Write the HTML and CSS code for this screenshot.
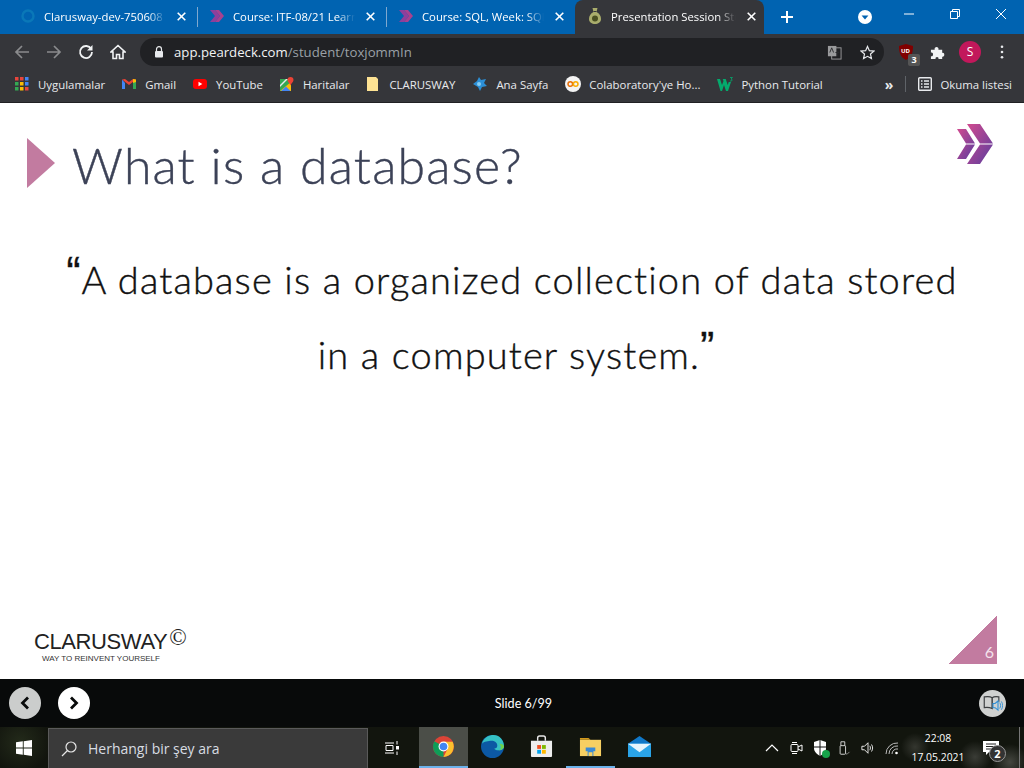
FILE: index.html
```html
<!DOCTYPE html>
<html>
<head>
    <title>Presentation Session</title>
    <link rel="stylesheet" href="styles.css">
</head>
<body>

    <div class="tabbar">
        <div class="tab">
            <svg class="favicon" viewBox="0 0 16 16"><circle cx="8" cy="8" r="5.5" fill="none" stroke="#0a78b8" stroke-width="2.4"/></svg>
            <span class="tab-title">Clarusway-dev-750608</span>
            <svg class="tab-close" viewBox="0 0 9 9"><path d="M.7.7l7.600 7.600M8.300.7L.7 8.300" stroke="#fff" stroke-width="1.600"/></svg>
        </div>
        <div class="tab tab-sep">
            <svg class="favicon" viewBox="0 0 16 16"><path d="M1 2h5l5 6-5 6H1l5-6z" fill="#8e3f9c"/><path d="M6 2h4l5 6-5 6H6l5-6z" fill="#a8418f"/></svg>
            <span class="tab-title">Course: ITF-08/21 Learn</span>
            <svg class="tab-close" viewBox="0 0 9 9"><path d="M.7.7l7.600 7.600M8.300.7L.7 8.300" stroke="#fff" stroke-width="1.600"/></svg>
        </div>
        <div class="tab tab-sep">
            <svg class="favicon" viewBox="0 0 16 16"><path d="M1 2h5l5 6-5 6H1l5-6z" fill="#8e3f9c"/><path d="M6 2h4l5 6-5 6H6l5-6z" fill="#a8418f"/></svg>
            <span class="tab-title">Course: SQL, Week: SQL</span>
            <svg class="tab-close" viewBox="0 0 9 9"><path d="M.7.7l7.600 7.600M8.300.7L.7 8.300" stroke="#fff" stroke-width="1.600"/></svg>
        </div>
        <div class="tab tab-active">
            <svg class="favicon" viewBox="0 0 16 16"><path d="M5.500 0h5L9.500 4c3 1.500 4.500 4 4.500 7 0 3.500-3 5-6 5s-6-1.500-6-5c0-3 1.500-5.500 4.500-7z" fill="#a9ad6c"/><path d="M6.500 3.500h3" stroke="#35363a"/><circle cx="8" cy="10.500" r="3" fill="#4a5022"/></svg>
            <span class="tab-title">Presentation Session Stu</span>
            <svg class="tab-close" viewBox="0 0 9 9"><path d="M.7.7l7.600 7.600M8.300.7L.7 8.300" stroke="#fff" stroke-width="1.600"/></svg>
        </div>
        <svg class="new-tab" viewBox="0 0 12 12"><path d="M6 0v12M0 6h12" stroke="#fff" stroke-width="2"/></svg>
        <svg class="profile-down" viewBox="0 0 14 14"><circle cx="7" cy="7" r="7" fill="#fff"/><path d="M3.600 5.400h6.800L7 9.600z" fill="#0063b1"/></svg>
        <div class="window-btns">
            <svg viewBox="0 0 10 10"><path d="M0 5h10" stroke="#fff"/></svg>
            <svg viewBox="0 0 10 10"><path d="M.5 2.500h7v7h-7zM2.500 2.500v-2h7v7h-2" fill="none" stroke="#fff"/></svg>
            <svg viewBox="0 0 10 10"><path d="M0 0l10 10M10 0L0 10" stroke="#fff"/></svg>
        </div>
    </div>

    <div class="toolbar">
        <svg class="nav-icon" viewBox="0 0 16 16"><path d="M15 8H2M8 2L2 8l6 6" fill="none" stroke="#8a8b8d" stroke-width="1.700"/></svg>
        <svg class="nav-icon" viewBox="0 0 16 16"><path d="M1 8h13M8 2l6 6-6 6" fill="none" stroke="#8a8b8d" stroke-width="1.700"/></svg>
        <svg class="nav-icon" viewBox="0 0 16 16"><path d="M13.200 5A6 6 0 1 0 14 8" fill="none" stroke="#f1f3f4" stroke-width="1.800"/><path d="M14.500 1v5.400H9z" fill="#f1f3f4"/></svg>
        <svg class="nav-icon" viewBox="0 0 16 16"><path d="M8 1.500L1 8h2v6.500h3.500v-4h3v4H13V8h2z" fill="none" stroke="#f1f3f4" stroke-width="1.600"/></svg>
        <div class="omnibox">
            <svg class="lock" viewBox="0 0 10 12"><path d="M2.500 5V3.200a2.500 2.500 0 0 1 5 0V5" fill="none" stroke="#e8eaed" stroke-width="1.200"/><rect x="1" y="5" width="8" height="6.500" rx="1" fill="#e8eaed"/></svg>
            <span class="url">app.peardeck.com<span class="url-path">/student/toxjommIn</span></span>
            <svg class="omni-icon" viewBox="0 0 16 16"><rect x="5" y="3" width="10" height="12" fill="none" stroke="#9a9b9d"/><rect x="1" y="1" width="9" height="11" fill="#9a9b9d"/><path d="M3 8l2-5 2 5M9 8h4M11 7v5" fill="none" stroke="#2a2b2e"/></svg>
            <svg class="omni-icon" viewBox="0 0 16 16"><path d="M8 1.500l2 4.500 4.800.5-3.600 3.200 1 4.800L8 12.100 3.800 14.500l1-4.800L1.200 6.500 6 6z" fill="none" stroke="#e8eaed" stroke-width="1.300"/></svg>
        </div>
        <div class="ublock">
            <svg viewBox="0 0 14 16"><path d="M7 0l7 2c0 6-1 11-7 14C1 13 0 8 0 2z" fill="#800000"/></svg>
            <span class="ublock-text">UD</span>
            <span class="ublock-count">3</span>
        </div>
        <svg class="puzzle" viewBox="0 0 16 16"><path d="M1 5h4c-1-4 5-4 4 0h4v3.500c3-1 3 5 0 4V15H9c1-3-4-3-3 0H1v-3c3 1 3-5 0-4z" fill="#f1f3f4"/></svg>
        <span class="avatar">S</span>
        <svg class="menu-dots" viewBox="0 0 4 16"><circle cx="2" cy="2" r="1.500" fill="#e8eaed"/><circle cx="2" cy="8" r="1.500" fill="#e8eaed"/><circle cx="2" cy="14" r="1.500" fill="#e8eaed"/></svg>
    </div>

    <div class="bookmarks">
        <span class="bookmark">
            <svg viewBox="0 0 14 14">
                <rect width="3.500" height="3.500" fill="#e8453c"/><rect x="5" width="3.500" height="3.500" fill="#e8453c"/><rect x="10" width="3.500" height="3.500" fill="#4285f4"/>
                <rect y="5" width="3.500" height="3.500" fill="#34a853"/><rect x="5" y="5" width="3.500" height="3.500" fill="#fbbc05"/><rect x="10" y="5" width="3.500" height="3.500" fill="#4285f4"/>
                <rect y="10" width="3.500" height="3.500" fill="#34a853"/><rect x="5" y="10" width="3.500" height="3.500" fill="#fbbc05"/><rect x="10" y="10" width="3.500" height="3.500" fill="#e8453c"/>
            </svg>Uygulamalar
        </span>
        <span class="bookmark">
            <svg viewBox="0 0 14 14"><path d="M0 2.500v9.500h3V6z" fill="#4285f4"/><path d="M14 2.500v9.500h-3V6z" fill="#34a853"/><path d="M0 2.500L7 8l7-5.500L11 2 7 5 3 2z" fill="#ea4335"/><path d="M11 2l3 .5V5l-3 1z" fill="#fbbc05"/></svg>Gmail
        </span>
        <span class="bookmark">
            <svg viewBox="0 0 14 14"><rect y="2" width="14" height="10" rx="3" fill="#f00"/><path d="M5.500 4.800v4.400L9.300 7z" fill="#fff"/></svg>YouTube
        </span>
        <span class="bookmark">
            <svg viewBox="0 0 14 14"><path d="M0 2h11v12H0z" fill="#34a853"/><path d="M0 14L11 5v9z" fill="#fbbc05"/><path d="M1 14l5-4.500 4.500 4.500z" fill="#4285f4"/><path d="M0 8L6 2h2L0 10z" fill="#e8eaed"/><path d="M10.500 0a3 3 0 0 1 3 3c0 2-2 3-3 5.500C9.500 6 7.500 5 7.500 3a3 3 0 0 1 3-3z" fill="#ea4335"/></svg>Haritalar
        </span>
        <span class="bookmark">
            <svg viewBox="0 0 14 14"><path d="M1 0h9l2 2v12H1z" fill="#fde293"/></svg>CLARUSWAY
        </span>
        <span class="bookmark bookmark-wide">
            <svg viewBox="0 0 16 16"><path d="M1 8l4-3 2-4 2 3 5-1-2 4 3 3-5 1-2 4-2-4z" fill="#2c8fd6"/><circle cx="7" cy="8" r="2" fill="#86cdf2"/></svg>Ana Sayfa
        </span>
        <span class="bookmark bookmark-wide">
            <svg viewBox="0 0 16 16"><circle cx="8" cy="8" r="8" fill="#f4f4f4"/><circle cx="5.300" cy="8" r="2.300" fill="none" stroke="#e8710a" stroke-width="1.500"/><circle cx="10.700" cy="8" r="2.300" fill="none" stroke="#f9ab00" stroke-width="1.500"/></svg>Colaboratory'ye Ho...
        </span>
        <span class="bookmark bookmark-wide">
            <svg viewBox="0 0 16 14"><path d="M0 2h3l2 6 1.500-4-.8-2h3l2 6 1-3h2.300l-3 9H9L7 8l-2 6H3.500z" fill="#04aa6d"/><path d="M13 .5h2.500L14 2c1.500 0 1.500 2 0 2h-1" fill="none" stroke="#04aa6d" stroke-width=".8"/></svg>Python Tutorial
        </span>
        <span class="bookmark-more">&raquo;</span>
        <span class="bookmark-sep"></span>
        <span class="bookmark reading-list">
            <svg viewBox="0 0 14 14"><rect x=".7" y=".7" width="12.600" height="12.600" rx="1" fill="none" stroke="#e8eaed" stroke-width="1.400"/><path d="M3 4h1.500M6 4h5M3 7h1.500M6 7h5M3 10h1.500M6 10h5" stroke="#e8eaed" stroke-width="1.300"/></svg>Okuma listesi
        </span>
    </div>

    <main class="slide">
        <header class="slide-head">
            <div class="slide-triangle"></div>
            <h1>What is a database?</h1>
            <svg class="slide-logo" viewBox="0 0 36 40">
                <defs>
                    <linearGradient id="chev" x1="0" y1="0" x2="1" y2="1">
                        <stop offset="0" stop-color="#d14a8f"/>
                        <stop offset="1" stop-color="#5a3d9e"/>
                    </linearGradient>
                </defs>
                <path d="M0 5h9l9 14.500H9z M9 20.500h9L9 35H0z" fill="url(#chev)"/>
                <path d="M10 0h13l13 19.500H23z M23 20.500h13L23 40H10z" fill="url(#chev)"/>
            </svg>
        </header>

        <div class="quote">
            <p><span class="quote-mark">&ldquo;</span>A database is a organized collection of data stored</p>
            <p class="quote-end">in a computer system.<span class="quote-mark">&rdquo;</span></p>
        </div>

        <footer class="slide-foot">
            <div class="brand">
                <div class="brand-name">CLARUSWAY<span class="brand-copy">&copy;</span></div>
                <div class="brand-tag">WAY TO REINVENT YOURSELF</div>
            </div>
            <div class="page-corner"><span>6</span></div>
        </footer>
    </main>

    <div class="deck-bar">
        <button class="deck-btn deck-prev">
            <svg viewBox="0 0 10 14"><path d="M8 1.500L2.500 7 8 12.500" fill="none" stroke="#080a0a" stroke-width="2.800"/></svg>
        </button>
        <button class="deck-btn">
            <svg viewBox="0 0 10 14"><path d="M2 1.500L7.500 7 2 12.500" fill="none" stroke="#080a0a" stroke-width="2.800"/></svg>
        </button>
        <span class="deck-count">Slide 6/99</span>
        <span class="deck-audio">
            <svg viewBox="0 0 24 20"><path d="M11 3C9 1.500 5 1.500 1.500 2v13c3-.5 6-.5 9.500 1zM11 3c2-1.500 5-1.500 8-1v6" fill="none" stroke="#3c3f41" stroke-width="1.400"/><path d="M11 3v13" stroke="#3c3f41"/><path d="M12 10h2.500l3.500-3v11l-3.500-3H12z" fill="none" stroke="#2f8fd6" stroke-width="1.300"/><path d="M20 9c1.500 1.500 1.500 5 0 7M22 7.500c2 2.500 2 7.500 0 10" fill="none" stroke="#2f8fd6" stroke-width="1.100"/></svg>
        </span>
    </div>

    <div class="taskbar">
        <svg class="win-logo" viewBox="0 0 16 16"><path d="M0 2.300l6.800-1v6.200H0zM7.700 1.200L16 0v7.500H7.700zM0 8.400h6.800v6.300l-6.800-1zM7.700 8.400H16V16l-8.300-1.200z" fill="#fff"/></svg>
        <div class="searchbox">
            <svg viewBox="0 0 16 16"><circle cx="10" cy="6" r="5" fill="none" stroke="#e6e6e6" stroke-width="1.200"/><path d="M6.500 9.500L1 15" stroke="#e6e6e6" stroke-width="1.300"/></svg>
            <span>Herhangi bir şey ara</span>
        </div>
        <svg class="taskview" viewBox="0 0 16 16"><path d="M1 3h9M1 13h9M2 5.500h7v5H2z" fill="none" stroke="#fff"/><path d="M13 1v3.500M13 11.500V15" stroke="#fff"/><rect x="12" y="6" width="3" height="3.500" fill="#fff"/></svg>
        <div class="task-app task-active">
            <svg viewBox="0 0 24 24"><circle cx="12" cy="12" r="11" fill="#db4437"/><path d="M12 12L2.500 6.500A11 11 0 0 0 12 23z" fill="#0f9d58"/><path d="M12 7h9.500A11 11 0 0 1 12 23l5-10z" fill="#fbc02d"/><circle cx="12" cy="12" r="5.200" fill="#fff"/><circle cx="12" cy="12" r="4" fill="#4285f4"/></svg>
        </div>
        <div class="task-app">
            <svg viewBox="0 0 24 24"><circle cx="12" cy="12" r="12" fill="#0c59a4"/><path d="M1 9C3 2 9 0 13 0c6 0 11 5 11 12 0 3-3 4-6 4-2 0-4-1-4-2 2 0 3-1 3-3 0-3-3-5-6-5S3 7 1 9z" fill="#35c1c4"/><path d="M24 12c0 2-3 4-6 4 4-1 3-5 1-7 3 0 5 1 5 3z" fill="#6fd34a"/></svg>
        </div>
        <div class="task-app">
            <svg viewBox="0 0 24 24"><path d="M8 6V3q0-2 2-2h4q2 0 2 2v3" fill="none" stroke="#e8e8e8" stroke-width="1.500"/><path d="M1 6h22v16q0 1-1 1H2q-1 0-1-1z" fill="#eeeeee"/><rect x="7.500" y="10.500" width="4" height="4" fill="#f25022"/><rect x="12.500" y="10.500" width="4" height="4" fill="#7fba00"/><rect x="7.500" y="15.500" width="4" height="4" fill="#00a4ef"/><rect x="12.500" y="15.500" width="4" height="4" fill="#ffb900"/></svg>
        </div>
        <div class="task-app task-open">
            <svg viewBox="0 0 24 24"><path d="M1 3h9l2 2H1z" fill="#d39a1b"/><rect x="1" y="5" width="22" height="17" fill="#f6cf62"/><path d="M7 17v-4h10v4h-2v5H9v-5z" fill="#3a8ad4"/><rect x="10" y="18" width="4" height="4" fill="#f6cf62"/></svg>
        </div>
        <div class="task-app">
            <svg viewBox="0 0 24 24"><path d="M0 9L12 1l12 8v14H0z" fill="#1078c8"/><path d="M0 9h24v14H0z" fill="#2aa4e8"/><path d="M0 9l12 9 12-9H0z" fill="#e6f5fd"/></svg>
        </div>
        <div class="tray">
            <svg class="tray-icon" viewBox="0 0 14 14"><path d="M1 10l6-6 6 6" fill="none" stroke="#fff" stroke-width="1.200"/></svg>
            <svg class="tray-icon" viewBox="0 0 14 14"><rect x="2" y="3.500" width="7" height="7" rx="1" fill="none" stroke="#fff"/><path d="M9 6l4-2v6L9 8M3 1.500h5M3 12.500h5" fill="none" stroke="#fff"/></svg>
            <span class="tray-shield">
                <svg viewBox="0 0 14 16"><path d="M7 0l6 2v6c0 4-3 6-6 8-3-2-6-4-6-8V2z" fill="#fff"/><path d="M7 0v16M1 7h12" stroke="#111"/></svg>
                <span class="tray-check"></span>
            </span>
            <svg class="tray-icon" viewBox="0 0 14 18"><rect x="2" y="6" width="7" height="11" rx="1" fill="none" stroke="#fff"/><path d="M3 6V1h5v5" fill="none" stroke="#fff"/><path d="M9 16l2 1 3-3" fill="none" stroke="#aaa"/></svg>
            <svg class="tray-icon" viewBox="0 0 16 14"><path d="M1 5h3l4-4v12L4 9H1z" fill="none" stroke="#fff"/><path d="M10 4.500c1 1.500 1 3.500 0 5M12 3c1.700 2.500 1.700 5.500 0 8" fill="none" stroke="#fff"/></svg>
            <svg class="tray-icon" viewBox="0 0 14 14"><path d="M1 13A11 11 0 0 1 13 2M4 13a8 8 0 0 1 9-8M7 13a5 5 0 0 1 6-5" fill="none" stroke="#bbb"/><circle cx="11.500" cy="12" r="1.300" fill="#fff"/></svg>
        </div>
        <div class="clock">
            <div>22:08</div>
            <div>17.05.2021</div>
        </div>
        <div class="notify">
            <svg viewBox="0 0 16 16"><path d="M0 1h16v11H6l-3 3v-3H0z" fill="#fff"/><path d="M3 4h10M3 6.500h10M3 9h7" stroke="#222"/></svg>
            <span class="notify-count">2</span>
        </div>
        <span class="show-desktop"></span>
    </div>

</body>
</html>
```

FILE: styles.css
```css
html, body {
    margin: 0;
    height: 100%;
    overflow: hidden;
}

body {
    width: 1024px;
    height: 768px;
    display: flex;
    flex-direction: column;
    font-family: "Open Sans", "Noto Sans", sans-serif;
    background: white;
}

svg {
    display: block;
    flex-shrink: 0;
}

/* chrome tabs */
.tabbar {
    height: 34px;
    background-color: #0063b1;
    display: flex;
    align-items: flex-end;
    padding-left: 8px;
    color: white;
    flex-shrink: 0;
}

.tab {
    width: 189px;
    height: 34px;
    box-sizing: border-box;
    display: flex;
    align-items: center;
    padding: 0 11px 2px 12px;
    font-size: 11.3px;
}

.tab-sep {
    position: relative;
}

.tab-sep::before {
    content: "";
    position: absolute;
    left: 0;
    top: 7px;
    width: 1px;
    height: 20px;
    background: #7fa8cf;
}

.tab-active {
    background-color: #35363a;
    border-radius: 8px 8px 0 0;
}

.favicon {
    width: 16px;
    height: 16px;
    margin-right: 8px;
}

.tab-title {
    flex: 1;
    white-space: nowrap;
    -webkit-mask-image: linear-gradient(to right, black 82%, transparent 96%);
    mask-image: linear-gradient(to right, black 82%, transparent 96%);
}

.tab-close {
    width: 9px;
    height: 9px;
    margin-left: 6px;
}

.new-tab {
    width: 12px;
    height: 12px;
    margin: 0 0 11px 17px;
}

.profile-down {
    width: 14px;
    height: 14px;
    margin: 0 0 10px 65px;
}

.window-btns {
    display: flex;
    gap: 36px;
    margin: 0 0 15px 32px;
}

.window-btns svg {
    width: 10px;
    height: 10px;
}

/* address bar */
.toolbar {
    height: 33px;
    box-sizing: border-box;
    padding: 3px 0 0 14px;
    background-color: #35363a;
    display: flex;
    align-items: center;
    flex-shrink: 0;
}

.nav-icon {
    width: 16px;
    height: 16px;
    margin-right: 16px;
}

.omnibox {
    width: 744px;
    height: 28px;
    margin-left: -2px;
    background: #202124;
    border-radius: 14px;
    display: flex;
    align-items: center;
    padding: 0 9px 0 14px;
    box-sizing: border-box;
}

.lock {
    width: 10px;
    height: 12px;
    margin-right: 10px;
}

.url {
    flex: 1;
    font-size: 13.2px;
    color: #f1f3f4;
}

.url-path {
    color: #9aa0a6;
}

.omni-icon {
    width: 15px;
    height: 15px;
    margin-left: 18px;
}

.ublock {
    position: relative;
    width: 14px;
    height: 16px;
    margin-left: 15px;
}

.ublock svg {
    width: 14px;
    height: 16px;
}

.ublock-text {
    position: absolute;
    left: 2px;
    top: 3px;
    font-size: 6px;
    font-weight: bold;
    color: white;
}

.ublock-count {
    position: absolute;
    left: 9px;
    top: 10px;
    width: 12px;
    height: 12px;
    background: #555;
    border-radius: 2px;
    color: white;
    font-size: 9px;
    font-weight: bold;
    text-align: center;
    line-height: 12px;
}

.puzzle {
    width: 15px;
    height: 15px;
    margin-left: 17px;
}

.avatar {
    width: 22px;
    height: 22px;
    border-radius: 50%;
    background: #c2185b;
    color: white;
    font-size: 12px;
    text-align: center;
    line-height: 22px;
    margin-left: 14px;
}

.menu-dots {
    width: 4px;
    height: 14px;
    margin-left: 19px;
}

/* bookmarks */
.bookmarks {
    height: 36px;
    box-sizing: border-box;
    background-color: #35363a;
    border-bottom: 1px solid #202124;
    display: flex;
    align-items: center;
    padding: 0 0 1px 15px;
    color: #e8eaed;
    font-size: 11.4px;
    flex-shrink: 0;
    white-space: nowrap;
}

.bookmark {
    display: flex;
    align-items: center;
    margin-right: 17px;
}

.bookmark svg {
    width: 14px;
    height: 14px;
    margin-right: 9px;
}

.bookmark-wide svg {
    width: 16px;
    height: 16px;
    margin-right: 8px;
}

.bookmark-more {
    font-size: 14px;
    font-weight: bold;
    margin-left: 45px;
}

.bookmark-sep {
    width: 1px;
    height: 16px;
    background: #5f6368;
    margin: 0 12px;
}

.reading-list {
    margin-right: 0;
}

.reading-list svg {
    margin-right: 8px;
}

/* slide */
.slide {
    height: 576px;
    flex-shrink: 0;
    background: white;
    display: flex;
    flex-direction: column;
}

.slide-head {
    display: flex;
    align-items: flex-start;
    padding: 21px 31px 0 27px;
}

.slide-triangle {
    width: 0;
    height: 0;
    margin-top: 14px;
    border-left: 28px solid #c27ba0;
    border-top: 25px solid transparent;
    border-bottom: 25px solid transparent;
}

.slide-head h1 {
    flex: 1;
    margin: 9px 0 0 17px;
    font-family: "Lato", sans-serif;
    font-weight: 300;
    font-size: 50px;
    line-height: 64px;
    letter-spacing: 1.15px;
    -webkit-text-stroke: 0.4px #3c4257;
    color: #3c4257;
}

.slide-logo {
    width: 36px;
    height: 40px;
}

.quote {
    margin-top: 45px;
    text-align: center;
    font-family: "Lato", sans-serif;
    font-weight: 300;
    font-size: 38px;
    line-height: 75px;
    letter-spacing: 1.15px;
    -webkit-text-stroke: 0.4px #111;
    color: #111;
}

.quote p {
    margin: 0;
}

.quote .quote-end {
    padding-left: 9px;
}

.quote-mark {
    font-family: "Liberation Sans", sans-serif;
    font-size: 42px;
    line-height: 0;
    vertical-align: 8px;
}

.slide-foot {
    margin-top: auto;
    display: flex;
    justify-content: space-between;
    align-items: flex-end;
    padding: 0 27px 15px 34px;
}

.brand-name {
    font-family: "Liberation Sans", sans-serif;
    font-size: 22px;
    line-height: 24px;
    color: #222;
    letter-spacing: -0.4px;
}

.brand-copy {
    font-family: "Liberation Serif", serif;
    font-size: 23px;
    line-height: 0;
    vertical-align: 4px;
    margin-left: 2px;
}

.brand-tag {
    font-family: "Liberation Sans", sans-serif;
    font-size: 8px;
    line-height: 10px;
    color: #333;
    margin-left: 8px;
}

.page-corner {
    width: 48px;
    height: 48px;
    background: linear-gradient(to bottom right, transparent 50%, #c27ba0 50%);
    display: flex;
    justify-content: flex-end;
    align-items: flex-end;
    color: #f4e3ec;
    font-family: "Lato", sans-serif;
    font-size: 16px;
    line-height: 25px;
}

.page-corner span {
    margin-right: 3px;
}

/* peardeck bottom bar */
.deck-bar {
    height: 48px;
    background: #080a0a;
    display: flex;
    align-items: center;
    padding-left: 9px;
    gap: 17px;
    flex-shrink: 0;
}

.deck-btn {
    width: 32px;
    height: 32px;
    border-radius: 50%;
    border: none;
    background: white;
    display: flex;
    align-items: center;
    justify-content: center;
    padding: 0;
}

.deck-btn svg {
    width: 10px;
    height: 14px;
}

.deck-prev {
    background: #cbcdcc;
}

.deck-count {
    flex: 1;
    text-align: center;
    color: white;
    font-family: "Lato", sans-serif;
    font-size: 12.6px;
    padding-right: 22px;
}

.deck-audio {
    width: 27px;
    height: 27px;
    border-radius: 50%;
    background: #cfd1d0;
    margin-right: 18px;
    display: flex;
    align-items: center;
    justify-content: center;
}

.deck-audio svg {
    width: 20px;
    height: 17px;
}

/* windows taskbar */
.taskbar {
    height: 41px;
    flex-shrink: 0;
    background-color: #12150e;
    background-image:
        radial-gradient(circle at 915px 20px, #34362f 0, transparent 14px),
        radial-gradient(circle at 975px 30px, #3a3c36 0, transparent 16px),
        radial-gradient(circle at 1010px 35px, #44463f 0, transparent 18px),
        radial-gradient(circle at 20px 15px, #232a1a 0, transparent 30px);
    display: flex;
    align-items: center;
    color: white;
}

.win-logo {
    width: 16px;
    height: 16px;
    margin: 0 16px;
}

.searchbox {
    width: 320px;
    height: 40px;
    margin-top: 1px;
    box-sizing: border-box;
    background: #3a3a3a;
    border: 1px solid #5a5a5a;
    border-bottom: none;
    display: flex;
    align-items: center;
    padding-left: 12px;
    font-size: 14px;
    color: #d8dde2;
}

.searchbox svg {
    width: 16px;
    height: 16px;
    margin-right: 11px;
}

.taskview {
    width: 16px;
    height: 16px;
    margin: 0 19px 0 16px;
}

.task-app {
    width: 49px;
    height: 41px;
    box-sizing: border-box;
    display: flex;
    align-items: center;
    justify-content: center;
    border-bottom: 2px solid transparent;
}

.task-app svg {
    width: 23px;
    height: 23px;
}

.task-active {
    background: #4b4e48;
    border-bottom-color: #6cb2eb;
}

.task-open {
    border-bottom-color: #6cb2eb;
}

.tray {
    display: flex;
    align-items: center;
    gap: 10px;
    margin-left: 101px;
}

.tray-icon {
    width: 14px;
    height: 14px;
}

.tray-shield {
    position: relative;
    width: 14px;
    height: 16px;
}

.tray-shield svg {
    width: 14px;
    height: 16px;
}

.tray-check {
    position: absolute;
    right: -3px;
    bottom: -2px;
    width: 8px;
    height: 8px;
    border-radius: 50%;
    background: #16a34a;
}

.clock {
    width: 72px;
    margin-left: 3px;
    text-align: center;
    font-size: 10.4px;
    line-height: 19px;
}

.notify {
    position: relative;
    margin-left: 9px;
}

.notify svg {
    width: 16px;
    height: 16px;
}

.notify-count {
    position: absolute;
    left: 6px;
    top: 5px;
    width: 15px;
    height: 15px;
    border-radius: 50%;
    border: 1px solid #999;
    background: #333;
    font-size: 11px;
    font-weight: bold;
    text-align: center;
    line-height: 15px;
}

.show-desktop {
    width: 1px;
    height: 41px;
    background: #777;
    margin-left: auto;
    margin-right: 4px;
}
```
